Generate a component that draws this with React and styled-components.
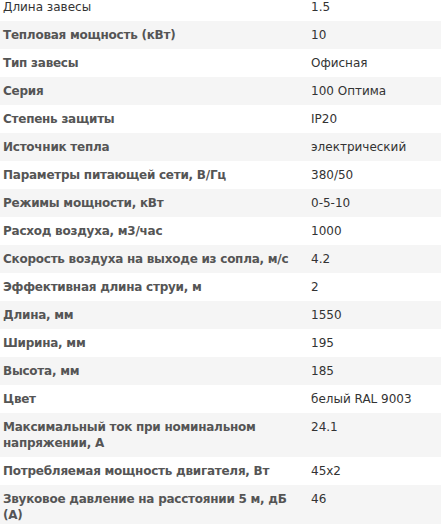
import styled, { createGlobalStyle } from "styled-components";

const GlobalStyle = createGlobalStyle`
    html, body {
        margin: 0;
        padding: 0;
        background: #fff;
        overflow: hidden;
    }
`

const Table = styled.table`
    width: 441px;
    margin-top: -7px;
    border-collapse: collapse;
    table-layout: fixed;
    font-family: "DejaVu Sans", Verdana, sans-serif;
    font-size: 12px;
    line-height: 16px;
`
const Row = styled.tr`
    background: #fff;
    &:nth-child(even) {
        background: #f5f5f5;
    }
`
const Label = styled.td`
    width: 302px;
    padding: 6px 3px;
    color: ${({ $plain }) => ($plain ? "#333" : "#555")};
    font-weight: ${({ $plain }) => ($plain ? 400 : 700)};
    letter-spacing: ${({ $plain }) => ($plain ? "0" : "-0.25px")};
    vertical-align: top;
`
const Value = styled.td`
    padding: 6px 3px;
    color: #333;
    vertical-align: top;
`

const specs = [
    ["Длина завесы", "1.5", true],
    ["Тепловая мощность (кВт)", "10"],
    ["Тип завесы", "Офисная"],
    ["Серия", "100 Оптима"],
    ["Степень защиты", "IP20"],
    ["Источник тепла", "электрический"],
    ["Параметры питающей сети, В/Гц", "380/50"],
    ["Режимы мощности, кВт", "0-5-10"],
    ["Расход воздуха, м3/час", "1000"],
    ["Скорость воздуха на выходе из сопла, м/с", "4.2"],
    ["Эффективная длина струи, м", "2"],
    ["Длина, мм", "1550"],
    ["Ширина, мм", "195"],
    ["Высота, мм", "185"],
    ["Цвет", "белый RAL 9003"],
    ["Максимальный ток при номинальном напряжении, А", "24.1"],
    ["Потребляемая мощность двигателя, Вт", "45x2"],
    ["Звуковое давление на расстоянии 5 м, дБ (А)", "46"],
];

const App = () => {
    return (
        <>
            <GlobalStyle />
            <Table>
                <tbody>
                    {specs.map(([name, value, plain]) => (
                        <Row key={name}>
                            <Label $plain={plain}>{name}</Label>
                            <Value>{value}</Value>
                        </Row>
                    ))}
                </tbody>
            </Table>
        </>
    );
};

export default App;
